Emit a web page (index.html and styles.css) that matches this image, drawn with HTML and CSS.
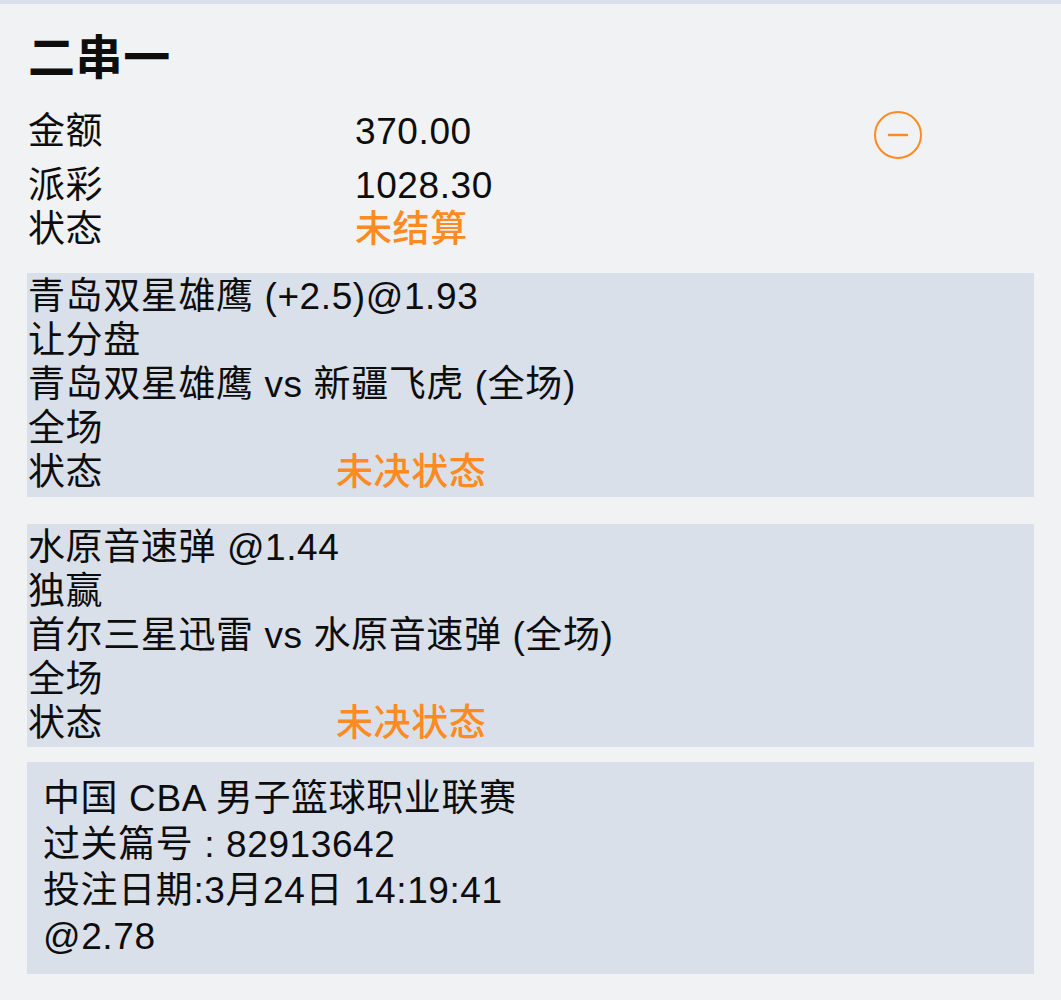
FILE: index.html
```html
<!DOCTYPE html>
<html lang="zh-CN">
<head>
    <meta charset="UTF-8">
    <meta name="viewport" content="width=device-width, initial-scale=1.0">
    <title>二串一</title>
    <link rel="stylesheet" href="styles.css">
</head>
<body>
    <div class="top-strip"></div>
    <div class="page">
        <h1 class="title">二串一</h1>

        <div class="summary">
            <div class="sum-row first">
                <span class="label">金额</span>
                <span class="value">370.00</span>
                <span class="remove">
                    <svg width="50" height="50" viewBox="0 0 50 50">
                        <circle cx="25" cy="25" r="23" fill="none" stroke="#fd8a22" stroke-width="2"/>
                        <line x1="16" y1="25" x2="34" y2="25" stroke="#fd8a22" stroke-width="2.5" stroke-linecap="round"/>
                    </svg>
                </span>
            </div>
            <div class="sum-row">
                <span class="label">派彩</span>
                <span class="value">1028.30</span>
            </div>
            <div class="sum-row">
                <span class="label">状态</span>
                <span class="value orange">未结算</span>
            </div>
        </div>

        <div class="leg">
            <div>青岛双星雄鹰 (+2.5)@1.93</div>
            <div>让分盘</div>
            <div>青岛双星雄鹰 vs 新疆飞虎 (全场)</div>
            <div>全场</div>
            <div class="leg-status"><span>状态</span><span class="orange">未决状态</span></div>
        </div>

        <div class="leg second">
            <div>水原音速弹 @1.44</div>
            <div>独赢</div>
            <div>首尔三星迅雷 vs 水原音速弹 (全场)</div>
            <div>全场</div>
            <div class="leg-status"><span>状态</span><span class="orange">未决状态</span></div>
        </div>

        <div class="info">
            <div>中国 CBA 男子篮球职业联赛</div>
            <div>过关篇号 : 82913642</div>
            <div>投注日期:3月24日 14:19:41</div>
            <div>@2.78</div>
        </div>
    </div>
</body>
</html>
```

FILE: styles.css
```css
body {
    margin: 0;
    padding: 0;
    background-color: #f1f2f4;
    color: #0d0d0d;
    font-family: 'Liberation Sans', 'Noto Sans CJK SC', sans-serif;
    font-size: 37px;
    letter-spacing: 0.6px;
}
.top-strip {
    height: 4px;
    background-color: #dae0ea;
}
.page {
    padding: 0 27px 26px 27px;
}
.title {
    margin: 24px 0 0 1px;
    font-size: 47px;
    line-height: 60px;
    font-weight: bold;
}
.summary {
    margin-top: 16px;
    padding-left: 1px;
}
.sum-row {
    display: grid;
    grid-template-columns: 327px 1fr 50px;
    padding-right: 111px;
    align-items: center;
    line-height: 44px;
}
.sum-row.first {
    height: 54px;
    margin-bottom: 6px;
}
.remove {
    display: flex;
    margin-top: 6px;
}
.orange {
    color: #fd8a22;
    font-weight: 500;
}
.leg {
    margin-top: 21px;
    background-color: #d9e0ea;
    padding: 2px 1px 2px 1px;
    line-height: 44px;
}
.leg.second {
    margin-top: 27px;
    padding-bottom: 1px;
}
.leg-status {
    display: grid;
    grid-template-columns: 308px 1fr;
}
.info {
    margin-top: 15px;
    background-color: #d9e0ea;
    padding: 14px 16px;
    line-height: 46px;
}
```
